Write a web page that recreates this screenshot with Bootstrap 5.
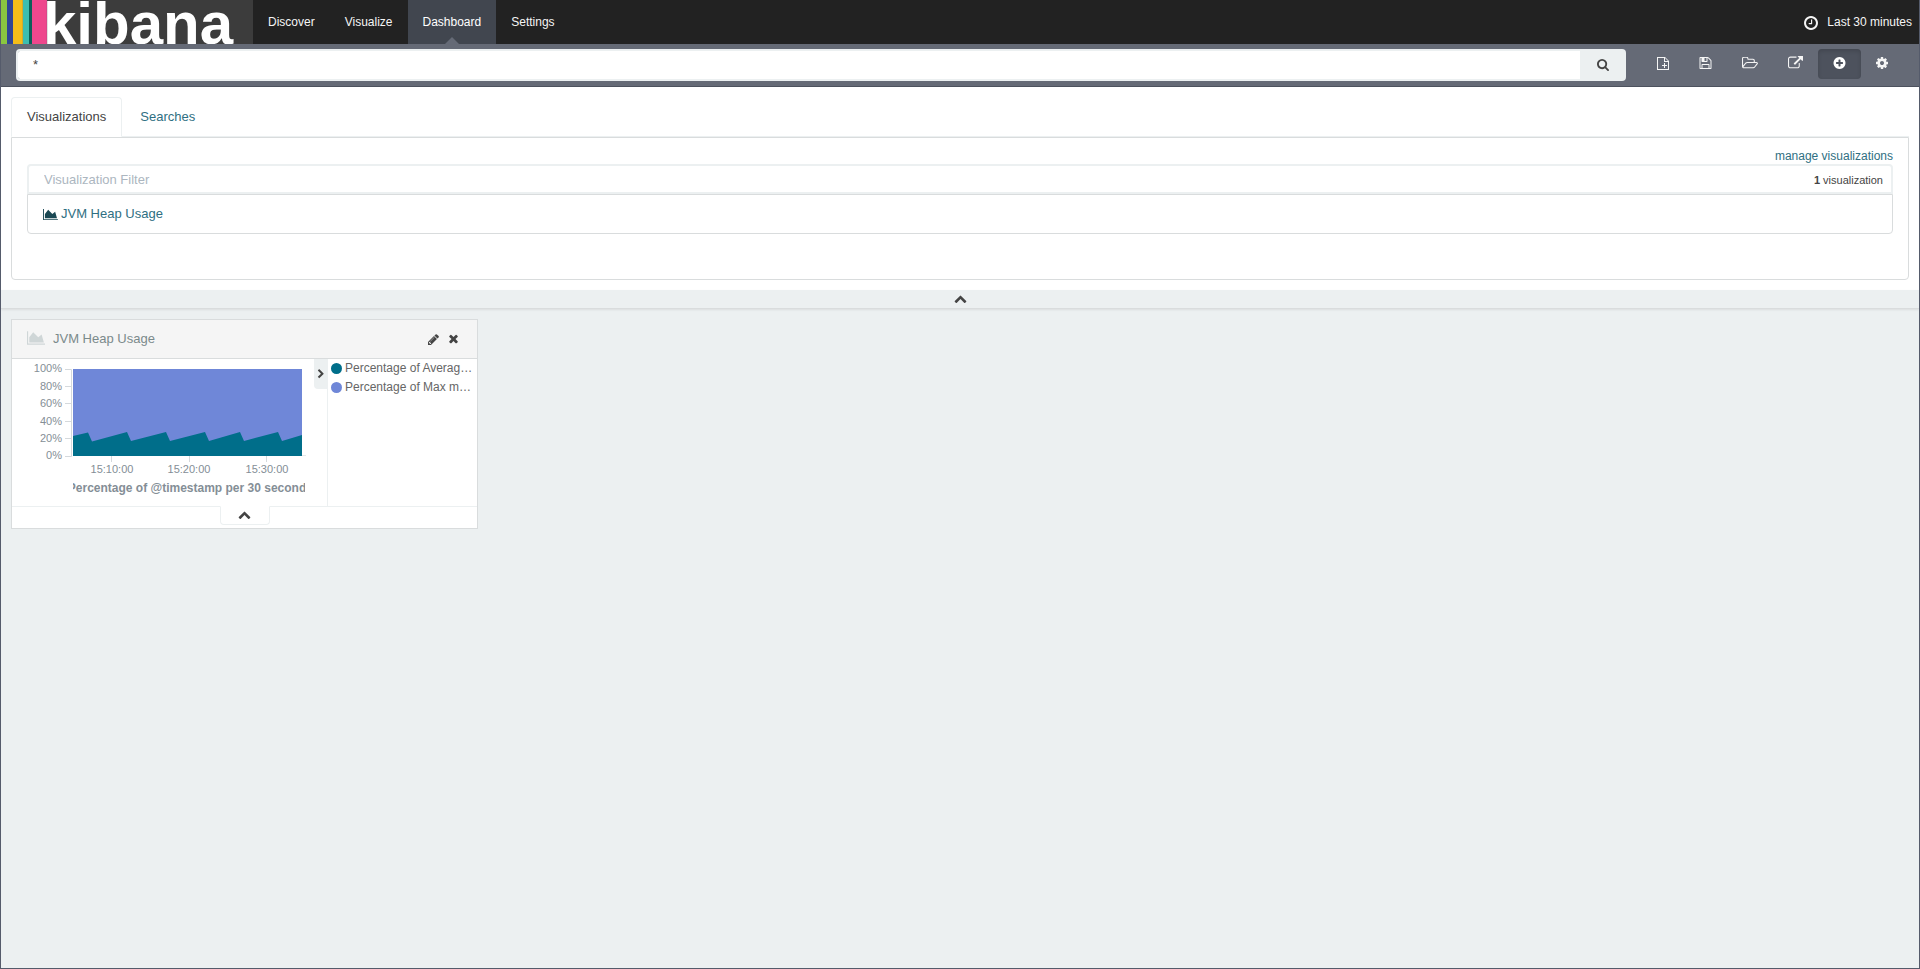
<!DOCTYPE html>
<html lang="en">
<head>
<meta charset="utf-8">
<meta name="viewport" content="width=device-width, initial-scale=1">
<title>Dashboard - Kibana</title>
<link href="https://cdn.jsdelivr.net/npm/bootstrap@5.3.0/dist/css/bootstrap.min.css" rel="stylesheet">
<style>
:root { --edge: #555b6b; --slate: #656a76; --pale: #ecf0f1; --line: #d9dcdd; --ink: #444; --teal: #2f6f82; }
body { font-family: "Liberation Sans", Arial, sans-serif; font-size: 13px; line-height: 18px; color: var(--ink); background: var(--pale); border: 1px solid var(--edge); border-top: 0; }
a { color: var(--teal); text-decoration: none; }
svg { display: block; fill: currentColor; flex: none; }
button { color: inherit; }

.topbar { background: #222; height: 44px; padding: 0; flex-wrap: nowrap; align-items: stretch; justify-content: flex-start; font-size: 12px; }
.brand { width: 252px; background: #3c3c3c; overflow: hidden; }
.stripes { width: 46px; background: linear-gradient(90deg, #8ac640 6px, #2f4595 6px 12px, #f4bd19 12px 21px, #d3a92c 21px 22px, #3cbeb1 22px 28px, #0a5f58 28px 31px, #ee478d 31px 45px, #d9488a 45px); }
.wordmark { font-size: 60px; line-height: 48px; font-weight: 700; color: #fff; margin-left: -4px; }
.topbar .nav-link { color: #f5f5f5; padding: 13px 15px; line-height: 18px; }
.topbar .nav-link.active { background: #41464f; color: #fff; position: relative; }
.topbar .nav-link.active::after { content: ""; position: absolute; bottom: 0; left: 50%; margin-left: -7px; border: 7px solid transparent; border-top: 0; border-bottom-color: var(--slate); }
.topbar .clock { padding-right: 7px; gap: 9px; }

.toolbar { background: var(--slate); height: 43px; border-bottom: 1px solid #4d525e; padding: 5px 16px 0 15px; }
.query { height: 32px; }
.query input { border: 2px solid var(--pale); border-right: 0; border-radius: 4px 0 0 4px; font-size: 13px; padding: 0 15px; color: var(--ink); }
.query .btn { width: 46px; background: var(--pale); border: 0; border-radius: 0 4px 4px 0; color: var(--ink); padding: 0; }
.tool { background: none; border: 0; color: #f5f5f5; height: 30px; padding: 0 15px 2px; border-radius: 4px; }
.tool.active { background: #4d525d; box-shadow: inset 0 2px 4px rgba(0,0,0,.15); color: #fff; }

.config { background: #fff; padding: 10px; }
.config .nav-tabs { border-bottom: 1px solid var(--pale); gap: 2px; }
.config .nav-link { color: var(--teal); padding: 10px 15px; border: 1px solid transparent; border-radius: 4px 4px 0 0; }
.config .nav-link.active { color: var(--ink); border-color: var(--pale) var(--pale) #fff; }
.pane { border: 1px solid var(--line); border-radius: 0 0 4px 4px; padding: 10px 15px 45px; }
.manage { font-size: 12px; line-height: 16px; }
.finder { border: 2px solid var(--pale); border-radius: 4px 4px 0 0; height: 30px; padding: 2px 8px 0 15px; }
.finder input { border: 0; background: none; outline: 0; min-width: 0; padding: 0; }
.finder input::placeholder { color: #acb6c0; opacity: 1; }
.finder .tally { font-size: 11px; }
.found { border: 1px solid var(--line); border-radius: 0 0 4px 4px; padding: 10px 15px; }
.found a { gap: 3px; }
.found svg { color: #1b4954; }
.closer { border: 0; background: var(--pale); height: 19px; padding: 0; border-bottom: 1px solid var(--line); box-shadow: 0 1px 2px rgba(0,0,0,.08); }

.board { padding: 10px; }
.panel { width: 467px; background: #fff; border: 1px solid var(--line); }
.panel-top { background: #f5f5f5; border-bottom: 1px solid var(--line); height: 39px; padding: 0 17px 0 15px; color: #7b8a8b; }
.plain { border: 0; background: none; padding: 0; color: var(--ink); }
.panel-body { height: 148px; border-bottom: 1px solid var(--pale); }
.axis { font-size: 11px; fill: #848e96; }
.fold { width: 13px; height: 30px; background: var(--pale); border: 0; border-radius: 0 0 0 4px; padding: 0; }
.legend-box { border-left: 1px solid var(--pale); font-size: 12px; line-height: 19px; color: #666; padding-left: 3px; }
.legend-row { gap: 3px; }
.dot { width: 11px; height: 11px; border-radius: 50%; }
.spy { width: 50px; height: 19px; margin: -1px auto 3px; background: #fff; border: 1px solid var(--pale); border-top-color: #fff; border-radius: 0 0 4px 4px; padding: 0; }
</style>
</head>
<body class="min-vh-100">
<header>
  <nav class="navbar topbar">
    <a class="brand d-flex" href="#" aria-label="kibana home"><span class="stripes"></span><span class="wordmark">kibana</span></a>
    <ul class="nav">
      <li><a class="nav-link" href="#">Discover</a></li>
      <li><a class="nav-link" href="#">Visualize</a></li>
      <li><a class="nav-link active" href="#" aria-current="page">Dashboard</a></li>
      <li><a class="nav-link" href="#">Settings</a></li>
    </ul>
    <a class="nav-link clock ms-auto d-flex align-items-center" href="#">
      <svg width="14" height="16" viewBox="128 -91 1536 1755"><path d="M1024 544v448q0 14-9 23t-23 9h-320q-14 0-23-9t-9-23v-64q0-14 9-23t23-9h224v-352q0-14 9-23t23-9h64q14 0 23 9t9 23zm416 352q0-148-73-273t-198-198-273-73-273 73-198 198-73 273 73 273 198 198 273 73 273-73 198-198 73-273zm224 0q0 209-103 385.500t-279.500 279.500-385.500 103-385.500-103-279.500-279.500-103-385.500 103-385.500 279.500-279.500 385.500-103 385.500 103 279.500 279.500 103 385.500z"/></svg>
      Last 30 minutes</a>
  </nav>
  <div class="toolbar d-flex align-items-start">
    <form class="query input-group flex-grow-1 w-auto">
      <input class="form-control" type="text" value="*" aria-label="Query">
      <button class="btn d-flex align-items-center justify-content-center" type="button" aria-label="Search"><svg width="12" height="12" viewBox="64 128 1664 1664"><path d="M1216 832q0-185-131.500-316.500t-316.500-131.500-316.500 131.500-131.500 316.500 131.500 316.500 316.500 131.500 316.500-131.500 131.500-316.500zm512 832q0 52-38 90t-90 38q-54 0-90-38l-343-342q-179 124-399 124-143 0-273.500-55.500t-225-150-150-225-55.500-273.500 55.500-273.500 150-225 225-150 273.500-55.500 273.500 55.500 225 150 150 225 55.500 273.500q0 220-124 399l343 343q37 37 37 90z"/></svg></button>
    </form>
    <div class="d-flex ms-3">
      <button class="tool" aria-label="New dashboard"><svg width="12" height="13" viewBox="0 0 12 13"><path fill-rule="evenodd" d="M0 0H8L12 4V13H0zM1 1V12H11V5H7V1zM8 1V4H11z"/><path d="M7 6H8V8H10V9H8V11H7V9H5V8H7z"/></svg></button>
      <button class="tool" aria-label="Save dashboard"><svg width="13" height="12" viewBox="128 128 1536 1536"><path d="M512 1536h768v-384h-768v384zm896 0h128v-896q0-14-10-38.500t-20-34.500l-281-281q-10-10-34-20t-39-10v416q0 40-28 68t-68 28h-576q-40 0-68-28t-28-68v-416h-128v1280h128v-416q0-40 28-68t68-28h832q40 0 68 28t28 68v416zm-384-928v-320q0-13-9.500-22.500t-22.500-9.500h-192q-13 0-22.500 9.500t-9.500 22.500v320q0 13 9.500 22.500t22.500 9.500h192q13 0 22.500-9.500t9.500-22.500zm640 32v928q0 40-28 68t-68 28h-1344q-40 0-68-28t-28-68v-1344q0-40 28-68t68-28h928q40 0 88 20t76 48l280 280q28 28 48 76t20 88z"/></svg></button>
      <button class="tool" aria-label="Open dashboard"><svg width="16" height="12" viewBox="64 256 1920 1280"><path d="M1845 931q0-35-53-35h-1088q-40 0-85.500 21.500t-71.500 52.500l-294 363q-18 24-18 40 0 35 53 35h1088q40 0 86-22t71-53l294-363q18-22 18-39zm-1141-163h768v-160q0-40-28-68t-68-28h-576q-40 0-68-28t-28-68v-64q0-40-28-68t-68-28h-320q-40 0-68 28t-28 68v853l256-315q44-53 116-87.500t140-34.500zm1269 163q0 62-46 120l-295 363q-43 53-116 87.500t-140 34.500h-1088q-92 0-158-66t-66-158v-960q0-92 66-158t158-66h320q92 0 158 66t66 158v32h544q92 0 158 66t66 158v160h192q54 0 99 24.500t67 70.500q15 32 15 68z"/></svg></button>
      <button class="tool" aria-label="Share dashboard"><svg width="15" height="14" viewBox="0 64 1792 1664"><path d="M1408 928v320q0 119-84.500 203.500t-203.500 84.500h-832q-119 0-203.500-84.500t-84.500-203.500v-832q0-119 84.500-203.500t203.500-84.500h704q14 0 23 9t9 23v64q0 14-9 23t-23 9h-704q-66 0-113 47t-47 113v832q0 66 47 113t113 47h832q66 0 113-47t47-113v-320q0-14 9-23t23-9h64q14 0 23 9t9 23zm384-864v512q0 26-19 45t-45 19-45-19l-176-176-652 652q-10 10-23 10t-23-10l-114-114q-10-10-10-23t10-23l652-652-176-176q-19-19-19-45t19-45 45-19h512q26 0 45 19t19 45z"/></svg></button>
      <button class="tool active" aria-label="Add visualization"><svg width="13" height="12" viewBox="128 128 1536 1536"><path d="M1344 960v-128q0-26-19-45t-45-19h-256v-256q0-26-19-45t-45-19h-128q-26 0-45 19t-19 45v256h-256q-26 0-45 19t-19 45v128q0 26 19 45t45 19h256v256q0 26 19 45t45 19h128q26 0 45-19t19-45v-256h256q26 0 45-19t19-45zm320-64q0 209-103 385.500t-279.500 279.500-385.500 103-385.500-103-279.500-279.500-103-385.500 103-385.500 279.500-279.500 385.500-103 385.500 103 279.500 279.500 103 385.500z"/></svg></button>
      <button class="tool" aria-label="Options"><svg width="12" height="12" viewBox="128 128 1536 1536"><path d="M1152 896q0-106-75-181t-181-75-181 75-75 181 75 181 181 75 181-75 75-181zm512-109v222q0 12-8 23t-20 13l-185 28q-19 54-39 91 35 50 107 138 10 12 10 25t-9 23q-27 37-99 108t-94 71q-12 0-26-9l-138-108q-44 23-91 38-16 136-29 186-7 28-36 28h-222q-14 0-24.500-8.500t-11.500-21.500l-28-184q-49-16-90-37l-141 107q-10 9-25 9-14 0-25-11-126-114-165-168-7-10-7-23 0-12 8-23 15-21 51-66.500t54-70.500q-27-50-41-99l-183-27q-13-2-21-12.500t-8-23.500v-222q0-12 8-23t19-13l186-28q14-46 39-92-40-57-107-138-10-12-10-24 0-10 9-23 26-36 98.500-107.500t94.500-71.500q13 0 26 10l138 107q44-23 91-38 16-136 29-186 7-28 36-28h222q14 0 24.500 8.500t11.500 21.500l28 184q49 16 90 37l142-107q9-9 24-9 13 0 25 10 129 119 165 170 7 8 7 22 0 12-8 23-15 21-51 66.500t-54 70.500q26 50 41 98l183 28q13 2 21 12.500t8 23.500z"/></svg></button>
    </div>
  </div>
</header>

<section class="config">
  <ul class="nav nav-tabs">
    <li class="nav-item"><a class="nav-link active" href="#">Visualizations</a></li>
    <li class="nav-item"><a class="nav-link" href="#">Searches</a></li>
  </ul>
  <div class="pane">
    <div class="manage text-end"><a href="#">manage visualizations</a></div>
    <div class="finder d-flex align-items-center">
      <input class="flex-grow-1" type="text" placeholder="Visualization Filter" aria-label="Visualization Filter">
      <span class="tally"><strong>1</strong> visualization</span>
    </div>
    <div class="found"><a class="d-flex align-items-center" href="#"><svg width="15" height="13" viewBox="0 0 2048 1792"><path d="M2048 1536v128h-2048v-1536h128v1408h1920zm-384-1024l256 896h-1664v-576l448-576 576 576z"/></svg>JVM Heap Usage</a></div>
  </div>
</section>
<button class="closer w-100 d-flex align-items-center justify-content-center" aria-label="Collapse"><svg width="13" height="13" viewBox="0 128 1792 1792"><path d="M1683 1331l-166 165q-19 19-45 19t-45-19l-531-531-531 531q-19 19-45 19t-45-19l-166-165q-19-19-19-45.500t19-45.500l742-741q19-19 45-19t45 19l742 741q19 19 19 45.500t-19 45.500z"/></svg></button>

<main class="board">
  <article class="panel">
    <div class="panel-top d-flex align-items-center">
      <svg class="me-2" width="18" height="18" viewBox="0 0 2048 2048" color="#cfd6d7"><path d="M2048 1536v128h-2048v-1536h128v1408h1920zm-384-1024l256 896h-1664v-576l448-576 576 576z"/></svg>
      <span>JVM Heap Usage</span>
      <button class="plain ms-auto" aria-label="Edit"><svg width="11" height="11" viewBox="128 128 1536 1536"><path d="M491 1536l91-91-235-235-91 91v107h128v128h107zm523-928q0-22-22-22-10 0-17 7l-542 542q-7 7-7 17 0 22 22 22 10 0 17-7l542-542q7-7 7-17zm-54-192l416 416-832 832h-416v-416zm683 96q0 53-37 90l-166 166-416-416 166-165q36-38 90-38 53 0 91 38l235 234q37 39 37 91z"/></svg></button>
      <button class="plain ms-2" aria-label="Remove"><svg width="13" height="13" viewBox="0 128 1792 1792"><path d="M1490 1322q0 40-28 68l-136 136q-28 28-68 28t-68-28l-294-294-294 294q-28 28-68 28t-68-28l-136-136q-28-28-28-68t28-68l294-294-294-294q-28-28-28-68t28-68l136-136q28-28 68-28t68 28l294 294 294-294q28-28 68-28t68 28l136 136q28 28 28 68t-28 68l-294 294 294 294q28 28 28 68z"/></svg></button>
    </div>
    <div class="panel-body d-flex">
      <svg width="302" height="147" viewBox="0 0 302 147" role="img" aria-label="JVM heap usage over time">
        <defs><clipPath id="titleClip"><rect x="0" y="106" width="232" height="30"/></clipPath></defs>
        <g transform="translate(61 10)">
          <rect width="229" height="87" fill="#6f87d8"/>
          <path fill="#006e8a" d="M0 67L15 63.500 19 72.500 54 63 58 72 93 63 97 72 132 63 136 72 167 63 171 72 205 63 209 72 229 66V87H0z"/>
          <path fill="none" stroke="#d5d9dc" d="M-8 .5H-1.500V87.500H-8M-8 17.500H-1M-8 34.500H-1M-8 52.500H-1M-8 69.500H-1M38.500 87V93M116.500 87V93M193.500 87V93"/>
          <path fill="none" stroke="#e4e8ea" d="M229 86.500H233"/>
          <g class="axis" text-anchor="end">
            <text x="-11" y="3">100%</text><text x="-11" y="21">80%</text><text x="-11" y="38">60%</text>
            <text x="-11" y="56">40%</text><text x="-11" y="73">20%</text><text x="-11" y="90">0%</text>
          </g>
          <g class="axis" text-anchor="middle">
            <text x="39" y="104">15:10:00</text><text x="116" y="104">15:20:00</text><text x="194" y="104">15:30:00</text>
          </g>
          <g clip-path="url(#titleClip)"><text x="114" y="123" text-anchor="middle" font-size="12" font-weight="700" fill="#848e96">Percentage of @timestamp per 30 second</text></g>
        </g>
      </svg>
      <button class="fold d-flex align-items-center justify-content-center" aria-label="Hide legend"><svg width="10" height="10" viewBox="0 0 1792 1792"><path d="M1363 877l-742 742q-19 19-45 19t-45-19l-166-166q-19-19-19-45t19-45l531-531-531-531q-19-19-19-45t19-45l166-166q19-19 45-19t45 19l742 742q19 19 19 45t-19 45z"/></svg></button>
      <div class="legend-box flex-grow-1 text-nowrap overflow-hidden">
        <div class="legend-row d-flex align-items-center"><span class="dot" style="background:#006e8a"></span><span>Percentage of Averag…</span></div>
        <div class="legend-row d-flex align-items-center"><span class="dot" style="background:#6f87d8"></span><span>Percentage of Max m…</span></div>
      </div>
    </div>
    <button class="spy d-flex align-items-center justify-content-center" aria-label="Show data"><svg width="13" height="13" viewBox="0 128 1792 1792"><path d="M1683 1331l-166 165q-19 19-45 19t-45-19l-531-531-531 531q-19 19-45 19t-45-19l-166-165q-19-19-19-45.500t19-45.500l742-741q19-19 45-19t45 19l742 741q19 19 19 45.500t-19 45.500z"/></svg></button>
  </article>
</main>
<script src="https://cdn.jsdelivr.net/npm/bootstrap@5.3.0/dist/js/bootstrap.bundle.min.js"></script>
</body>
</html>
